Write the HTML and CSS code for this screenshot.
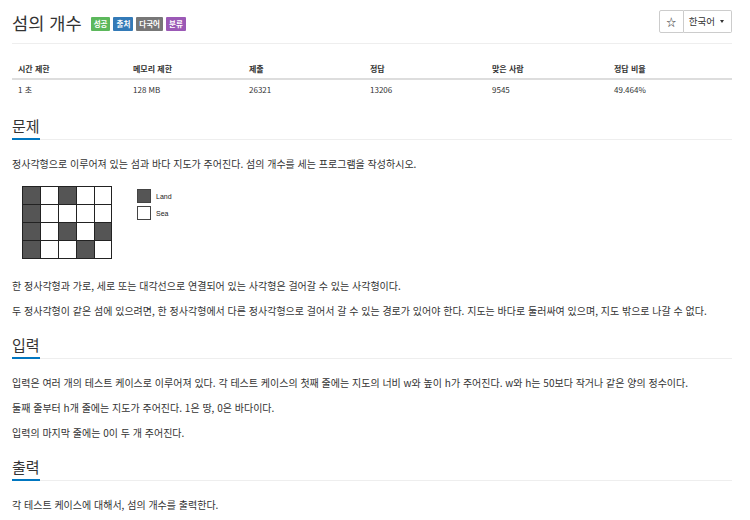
FILE: index.html
```html
<!DOCTYPE html>
<html lang="ko">
<head>
    <meta charset="UTF-8">
    <title>섬의 개수</title>
    <link rel="stylesheet" href="styles.css">
</head>
<body>
    <div class="container">
        <div class="page-header">
            <div class="title-wrap">
                <h1 class="title">섬의 개수</h1>
                <span class="label label-success">성공</span>
                <span class="label label-primary">출처</span>
                <span class="label label-default">다국어</span>
                <span class="label label-purple">분류</span>
            </div>
            <div class="btn-group">
                <div class="btn btn-star">☆</div>
                <div class="btn btn-lang">한국어 <span class="caret"></span></div>
            </div>
        </div>

        <table class="info-table">
            <thead>
                <tr>
                    <th>시간 제한</th>
                    <th>메모리 제한</th>
                    <th>제출</th>
                    <th>정답</th>
                    <th>맞은 사람</th>
                    <th>정답 비율</th>
                </tr>
            </thead>
            <tbody>
                <tr>
                    <td>1 초</td>
                    <td>128 MB</td>
                    <td>26321</td>
                    <td>13206</td>
                    <td>9545</td>
                    <td>49.464%</td>
                </tr>
            </tbody>
        </table>

        <div class="section">
            <div class="headline"><h2>문제</h2></div>
            <p>정사각형으로 이루어져 있는 섬과 바다 지도가 주어진다. 섬의 개수를 세는 프로그램을 작성하시오.</p>
            <div class="figure">
                <svg width="100" height="76" viewBox="0 0 100 76" class="map">
                    <g stroke="#222" stroke-width="1">
                        <rect x="10.5" y="0.5" width="18" height="18" fill="#555"/>
                        <rect x="28.5" y="0.5" width="18" height="18" fill="#fff"/>
                        <rect x="46.5" y="0.5" width="18" height="18" fill="#555"/>
                        <rect x="64.5" y="0.5" width="18" height="18" fill="#fff"/>
                        <rect x="82.5" y="0.5" width="17" height="18" fill="#fff"/>
                        <rect x="10.5" y="18.5" width="18" height="18" fill="#555"/>
                        <rect x="28.5" y="18.5" width="18" height="18" fill="#fff"/>
                        <rect x="46.5" y="18.5" width="18" height="18" fill="#fff"/>
                        <rect x="64.5" y="18.5" width="18" height="18" fill="#fff"/>
                        <rect x="82.5" y="18.5" width="17" height="18" fill="#fff"/>
                        <rect x="10.5" y="36.5" width="18" height="18" fill="#555"/>
                        <rect x="28.5" y="36.5" width="18" height="18" fill="#fff"/>
                        <rect x="46.5" y="36.5" width="18" height="18" fill="#555"/>
                        <rect x="64.5" y="36.5" width="18" height="18" fill="#fff"/>
                        <rect x="82.5" y="36.5" width="17" height="18" fill="#555"/>
                        <rect x="10.5" y="54.5" width="18" height="18" fill="#555"/>
                        <rect x="28.5" y="54.5" width="18" height="18" fill="#fff"/>
                        <rect x="46.5" y="54.5" width="18" height="18" fill="#fff"/>
                        <rect x="64.5" y="54.5" width="18" height="18" fill="#555"/>
                        <rect x="82.5" y="54.5" width="17" height="18" fill="#fff"/>
                    </g>
                </svg>
                <div class="legend">
                    <div class="legend-row"><span class="swatch swatch-land"></span>Land</div>
                    <div class="legend-row"><span class="swatch"></span>Sea</div>
                </div>
            </div>
            <p>한 정사각형과 가로, 세로 또는 대각선으로 연결되어 있는 사각형은 걸어갈 수 있는 사각형이다.</p>
            <p>두 정사각형이 같은 섬에 있으려면, 한 정사각형에서 다른 정사각형으로 걸어서 갈 수 있는 경로가 있어야 한다. 지도는 바다로 둘러싸여 있으며, 지도 밖으로 나갈 수 없다.</p>
        </div>

        <div class="section">
            <div class="headline"><h2>입력</h2></div>
            <p>입력은 여러 개의 테스트 케이스로 이루어져 있다. 각 테스트 케이스의 첫째 줄에는 지도의 너비 w와 높이 h가 주어진다. w와 h는 50보다 작거나 같은 양의 정수이다.</p>
            <p>둘째 줄부터 h개 줄에는 지도가 주어진다. 1은 땅, 0은 바다이다.</p>
            <p>입력의 마지막 줄에는 0이 두 개 주어진다.</p>
        </div>

        <div class="section">
            <div class="headline"><h2>출력</h2></div>
            <p>각 테스트 케이스에 대해서, 섬의 개수를 출력한다.</p>
        </div>
    </div>
</body>
</html>
```

FILE: styles.css
```css
* {
    margin: 0;
    padding: 0;
    box-sizing: border-box;
}

body {
    font-family: "Noto Sans CJK KR", "Noto Sans", sans-serif;
    font-size: 10px;
    color: #333;
    background: #fff;
}

.container {
    padding: 0 18px 0 12px;
}

.page-header {
    display: flex;
    justify-content: space-between;
    align-items: center;
    height: 44px;
    padding-top: 1px;
    border-bottom: 1px solid #eee;
}

.title-wrap {
    display: flex;
    align-items: center;
    gap: 3px;
}

.title {
    font-size: 17.6px;
    font-weight: 400;
    margin-right: 6px;
}

.label {
    display: inline-block;
    padding: 0 3px;
    height: 14px;
    font-size: 7.5px;
    font-weight: 700;
    line-height: 14px;
    color: #fff;
    border-radius: 1px;
    margin-top: 3px;
}

.label-success { background: #5cb85c; }
.label-primary { background: #337ab7; }
.label-default { background: #777; }
.label-purple { background: #9b59b6; }

.btn-group {
    display: flex;
    margin-bottom: 2px;
}

.btn {
    height: 23px;
    display: flex;
    align-items: center;
    border: 1px solid #ccc;
    font-size: 9.5px;
    color: #333;
}

.btn-star {
    width: 25px;
    justify-content: center;
    border-radius: 2px 0 0 2px;
    font-size: 10px;
}

.btn-lang {
    padding: 0 7px 0 5px;
    border-left: none;
    border-radius: 0 2px 2px 0;
    gap: 5px;
}

.caret {
    display: inline-block;
    width: 0;
    height: 0;
    border-top: 3px solid #333;
    border-left: 2.5px solid transparent;
    border-right: 2.5px solid transparent;
    margin-top: 1px;
}

.info-table {
    width: 100%;
    border-collapse: collapse;
    margin: 15px 0 4px 0;
    table-layout: fixed;
}

.info-table th:nth-child(1) { width: 115px; }
.info-table th:nth-child(2) { width: 116px; }
.info-table th:nth-child(3) { width: 121px; }
.info-table th:nth-child(4) { width: 122px; }
.info-table th:nth-child(5) { width: 122px; }

.info-table th,
.info-table td {
    text-align: left;
    padding: 0 6px;
    font-size: 8px;
}

.info-table th {
    font-weight: 700;
    height: 20px;
    border-bottom: 2px solid #ddd;
}

.info-table td {
    height: 20px;
}

.section {
    margin-top: 15px;
}

.headline {
    border-bottom: 1px solid #eee;
    margin-bottom: 16px;
}

.headline h2 {
    display: inline-block;
    font-size: 15px;
    font-weight: 400;
    line-height: 24px;
    border-bottom: 2px solid #0076c0;
    margin-bottom: -1px;
}

.section p {
    font-size: 10px;
    line-height: 15px;
    margin-bottom: 10px;
}

.figure {
    display: flex;
    align-items: flex-start;
    gap: 25px;
    margin: 15px 0 16px 0;
}

.legend {
    padding-top: 3px;
    font-family: "Liberation Sans", Arial, sans-serif;
    font-size: 7px;
    color: #222;
}

.legend-row {
    display: flex;
    align-items: center;
    gap: 5px;
    margin-bottom: 3px;
}

.swatch {
    width: 14px;
    height: 14px;
    border: 1px solid #444;
    background: #fff;
}

.swatch-land {
    background: #555;
}
```
